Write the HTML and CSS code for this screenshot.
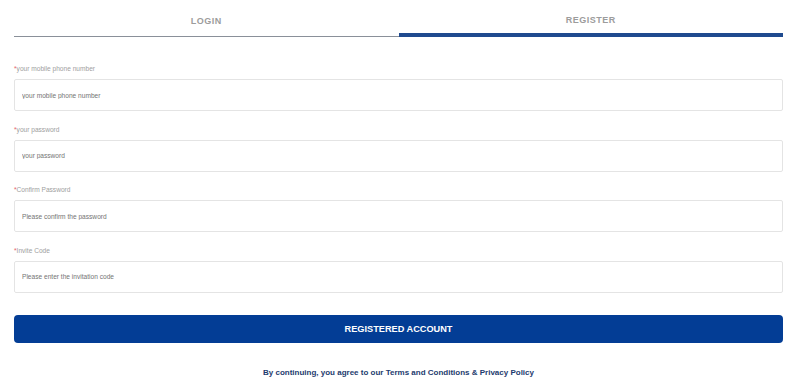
FILE: index.html
```html
<!DOCTYPE html>
<html lang="en">
<head>
    <meta charset="UTF-8">
    <meta name="viewport" content="width=device-width, initial-scale=1.0">
    <title>Register</title>
    <link rel="stylesheet" href="styles.css">
</head>
<body>
    <div class="page">
        <!-- Login / Register tabs -->
        <div class="tabs">
            <div class="tab">LOGIN</div>
            <div class="tab active">REGISTER</div>
        </div>

        <form class="register-form">
            <div class="field">
                <label for="phone"><span class="req">*</span>your mobile phone number</label>
                <input type="text" id="phone" placeholder="your mobile phone number">
            </div>
            <div class="field">
                <label for="password"><span class="req">*</span>your password</label>
                <input type="password" id="password" placeholder="your password">
            </div>
            <div class="field">
                <label for="confirm"><span class="req">*</span>Confirm Password</label>
                <input type="password" id="confirm" placeholder="Please confirm the password">
            </div>
            <div class="field">
                <label for="invite"><span class="req">*</span>Invite Code</label>
                <input type="text" id="invite" placeholder="Please enter the invitation code">
            </div>

            <button type="button" class="submit-btn">REGISTERED ACCOUNT</button>
        </form>

        <p class="terms">By continuing, you agree to our Terms and Conditions &amp; Privacy Policy</p>
    </div>
</body>
</html>
```

FILE: styles.css
```css
body {
    font-family: "Liberation Sans", Arial, sans-serif;
    margin: 0;
    background-color: #fff;
}

.page {
    width: 769px;
    margin-left: 14px;
}

.tabs {
    display: flex;
}

.tab {
    flex: 1;
    height: 37px;
    box-sizing: border-box;
    padding-top: 6px;
    display: flex;
    align-items: center;
    justify-content: center;
    font-size: 9px;
    font-weight: bold;
    letter-spacing: 0.5px;
    color: #9c9c9c;
    border-bottom: 1px solid #8a9099;
}

.tab.active {
    border-bottom: 4px solid #1f4a8f;
}

.register-form {
    padding-top: 27px;
}

.field {
    margin-bottom: 13.67px;
}

label {
    display: block;
    height: 10px;
    line-height: 10px;
    margin-bottom: 5px;
    font-size: 6.6px;
    color: #a0a0a0;
}

.req {
    color: #e35d6a;
}

input {
    display: block;
    width: 100%;
    height: 32px;
    box-sizing: border-box;
    padding: 0 7px;
    border: 1px solid #e4e4e4;
    border-radius: 2px;
    font-family: inherit;
    font-size: 6.6px;
    color: #555;
    outline: none;
}

input::placeholder {
    color: #747474;
}

.submit-btn {
    display: block;
    width: 100%;
    height: 28px;
    margin-top: 22px;
    border: none;
    border-radius: 4px;
    background-color: #033d95;
    color: #fff;
    font-family: inherit;
    font-size: 9.2px;
    font-weight: bold;
    cursor: pointer;
}

.terms {
    margin: 25px 0 0;
    line-height: 10px;
    text-align: center;
    font-size: 8px;
    font-weight: bold;
    color: #1d3b6e;
}
```
